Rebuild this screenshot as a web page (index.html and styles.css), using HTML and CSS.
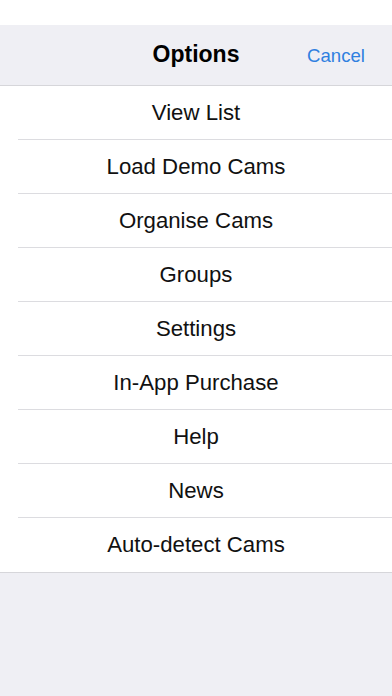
FILE: index.html
```html
<!DOCTYPE html>
<html lang="en">
<head>
    <meta charset="UTF-8">
    <meta name="viewport" content="width=device-width, initial-scale=1.0">
    <title>Options</title>
    <link rel="stylesheet" href="styles.css">
</head>
<body>

    <!-- Status bar area -->
    <div class="status-bar"></div>

    <!-- Navigation bar -->
    <div class="nav-bar">
        <span class="nav-side"></span>
        <span class="nav-title">Options</span>
        <span class="nav-side nav-cancel">Cancel</span>
    </div>

    <!-- Options list -->
    <ul class="options">
        <li class="option">View List</li>
        <li class="option">Load Demo Cams</li>
        <li class="option">Organise Cams</li>
        <li class="option">Groups</li>
        <li class="option">Settings</li>
        <li class="option">In-App Purchase</li>
        <li class="option">Help</li>
        <li class="option">News</li>
        <li class="option">Auto-detect Cams</li>
    </ul>

</body>
</html>
```

FILE: styles.css
```css
body {
    margin: 0;
    background-color: #efeff4;
    font-family: "Liberation Sans", Arial, sans-serif;
    color: #111;
}

/* Status bar */
.status-bar {
    height: 25px;
    background-color: #fff;
}

/* Navigation bar */
.nav-bar {
    height: 60px;
    background-color: #efeff4;
    border-bottom: 1px solid #d6d6da;
    display: flex;
    align-items: center;
    justify-content: space-between;
}

.nav-title {
    font-weight: bold;
    font-size: 23px;
    color: #000;
    margin-top: -2px;
}

.nav-side {
    width: 100px;
}

.nav-cancel {
    color: #2f80e0;
    font-size: 18.6px;
    text-align: right;
    padding-right: 27px;
    padding-top: 2px;
    box-sizing: border-box;
}

/* Options list */
.options {
    list-style: none;
    margin: 0;
    padding: 0;
    background-color: #fff;
    border-bottom: 1px solid #d6d6da;
}

.option {
    height: 54px;
    box-sizing: border-box;
    margin-left: 18px;
    padding-right: 18px;
    border-bottom: 1px solid #dcdce0;
    display: flex;
    align-items: center;
    justify-content: center;
    font-size: 22.2px;
}

.option:last-child {
    border-bottom: none;
}
```
